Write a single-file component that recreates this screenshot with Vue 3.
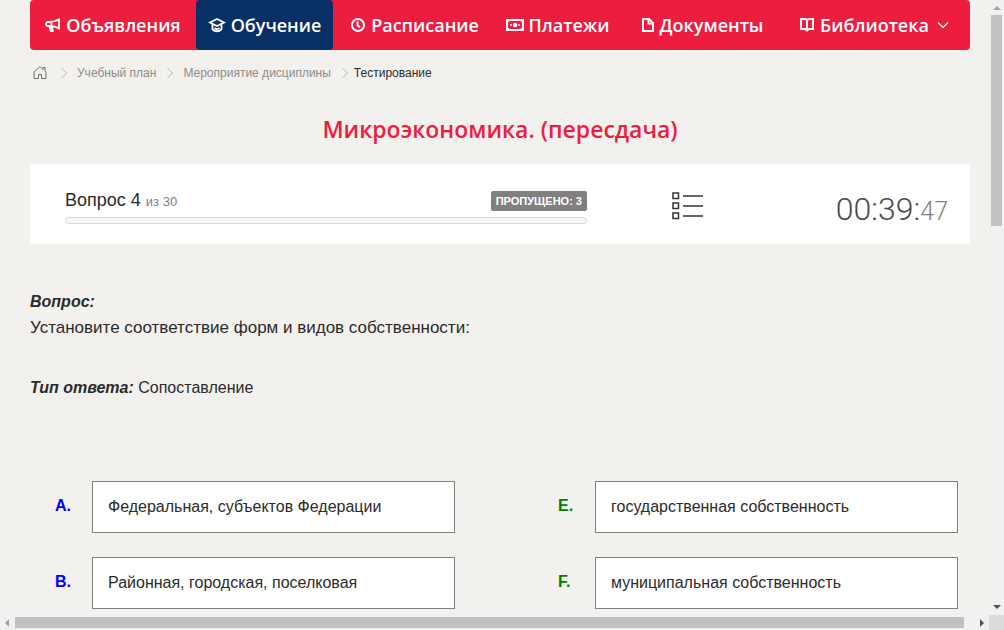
<script setup>
const left = [
  { key: 'A.', text: 'Федеральная, субъектов Федерации' },
  { key: 'B.', text: 'Районная, городская, поселковая' },
]
const right = [
  { key: 'E.', text: 'государственная собственность' },
  { key: 'F.', text: 'муниципальная собственность' },
]
const crumbs = ['Учебный план', 'Мероприятие дисциплины']
</script>

<template>
  <div class="window">
    <div class="view">
      <div class="page">
        <nav class="nav" aria-label="Главное меню">
          <a href="#" class="item">
            <svg width="16" height="16" viewBox="0 0 16 16" fill="none" stroke="currentColor" stroke-width="1.800">
              <path d="M14 1.500v11M13.500 2.500C11 4.300 8 5 4.500 5H3a2 2 0 0 0 0 4h1.500c3.500 0 6.500.7 9 2.200M6.500 5v4M4.500 9.500l1.200 4.600h2L6.800 9.500" />
            </svg>
            <span>Объявления</span>
          </a>
          <a href="#" class="item active">
            <svg width="18" height="16" viewBox="0 0 18 16" fill="none" stroke="currentColor" stroke-width="1.800">
              <path d="M2 5.500l7-3.500 7 3.500L9 9zM4.500 7.500v4.800c2.400 2.600 6.600 2.600 9 0V7.500M6.500 11c1.500 1.500 3.500 1.500 5 0" />
            </svg>
            <span>Обучение</span>
          </a>
          <a href="#" class="item">
            <svg width="16" height="16" viewBox="0 0 16 16" fill="none" stroke="currentColor" stroke-width="2">
              <circle cx="8" cy="8" r="6" />
              <path d="M7.500 4.500v3.800l2.500 2" />
            </svg>
            <span>Расписание</span>
          </a>
          <a href="#" class="item">
            <svg width="18" height="16" viewBox="0 0 18 16">
              <path fill="none" stroke="currentColor" stroke-width="2" d="M1 3h16v10H1z" />
              <path fill="currentColor" d="M1 3h4L1 6zM17 3h-4l4 3zM1 13h4l-4-3zM17 13h-4l4-3z" />
              <circle cx="9" cy="8" r="2.200" fill="currentColor" />
              <circle cx="5" cy="8" r="1" fill="currentColor" />
              <circle cx="13" cy="8" r="1" fill="currentColor" />
            </svg>
            <span>Платежи</span>
          </a>
          <a href="#" class="item">
            <svg width="14" height="16" viewBox="0 0 14 16" fill="none" stroke="currentColor" stroke-width="2">
              <path d="M2 2h6l4 4v8H2zM7.500 2v4.500H12" />
            </svg>
            <span>Документы</span>
          </a>
          <a href="#" class="item last">
            <svg width="16" height="16" viewBox="0 0 16 16" fill="none" stroke="currentColor" stroke-width="2">
              <path d="M8 3v11M2 2h4l2 1 2-1h4v10h-4l-2 1.500L6 12H2z" />
            </svg>
            <span>Библиотека</span>
            <svg class="caret" width="12" height="8" viewBox="0 0 12 8" fill="none" stroke="currentColor" stroke-width="1.300">
              <path d="M1 1.500l5 5 5-5" />
            </svg>
          </a>
        </nav>

        <nav class="crumbs" aria-label="Навигация">
          <a href="#" class="home" aria-label="Главная">
            <svg width="14" height="14" viewBox="0 0 14 14" fill="none" stroke="currentColor">
              <path d="M1.500 12.500H1V6l5.500-5h1L10 3.500V1.500h2V5l1 1.500v6H8.500v-4h-3v4z" />
            </svg>
          </a>
          <template v-for="c in crumbs" :key="c">
            <svg class="sep" width="8" height="12" viewBox="0 0 8 12" fill="none" stroke="currentColor"><path d="M1.500 1l5 5-5 5" /></svg>
            <a href="#">{{ c }}</a>
          </template>
          <svg class="sep end" width="8" height="12" viewBox="0 0 8 12" fill="none" stroke="currentColor"><path d="M1.500 1l5 5-5 5" /></svg>
          <span class="current">Тестирование</span>
        </nav>

        <h1>Микроэкономика. (пересдача)</h1>

        <section class="card">
          <div class="status">
            <div class="row">
              <div class="count">Вопрос 4 <small>из 30</small></div>
              <span class="badge">ПРОПУЩЕНО: 3</span>
            </div>
            <div class="bar" role="progressbar" aria-label="Ход теста" aria-valuenow="0" aria-valuemin="0" aria-valuemax="30"></div>
          </div>
          <button class="list" type="button" aria-label="Список вопросов">
            <svg width="32" height="28" viewBox="0 0 32 28" fill="none" stroke="currentColor">
              <path d="M1 1h5.500v5.500H1zM1 11h5.500v5.500H1zM1 21h5.500v5.500H1z" stroke-width="1.500" />
              <path d="M11 4h20M11 14h20M11 24h20" stroke-width="1.300" />
            </svg>
          </button>
          <div class="timer">00:39:<span>47</span></div>
        </section>

        <section class="question">
          <p class="lead"><b>Вопрос:</b></p>
          <p class="text">Установите соответствие форм и видов собственности:</p>
          <p class="kind"><b>Тип ответа:</b> Сопоставление</p>
        </section>

        <section class="match">
          <div class="side blue">
            <div v-for="o in left" :key="o.key" class="option">
              <b>{{ o.key }}</b>
              <div class="box">{{ o.text }}</div>
            </div>
          </div>
          <div class="side green">
            <div v-for="o in right" :key="o.key" class="option">
              <b>{{ o.key }}</b>
              <div class="box">{{ o.text }}</div>
            </div>
          </div>
        </section>
      </div>
    </div>

    <div class="track vertical" aria-hidden="true">
      <svg width="15" height="15" viewBox="0 0 15 15" fill="#a3a3a3"><path d="M4 10l4-4 4 4z" /></svg>
      <div class="rail"><div class="thumb"></div></div>
      <svg width="15" height="15" viewBox="0 0 15 15" fill="#505050"><path d="M4 5h8l-4 4z" /></svg>
    </div>
    <div class="track horizontal" aria-hidden="true">
      <svg width="15" height="15" viewBox="0 0 15 15" fill="#a3a3a3"><path d="M9 4v8L5 8z" /></svg>
      <div class="rail"><div class="thumb"></div></div>
      <svg width="15" height="15" viewBox="0 0 15 15" fill="#505050"><path d="M6 4v8l4-4z" /></svg>
    </div>
    <div class="corner"></div>
  </div>
</template>

<style>
body {
  background: #f3f1ee;
}
</style>

<style scoped>
.window {
  display: grid;
  grid-template: minmax(0, 1fr) 15px / minmax(0, 1fr) 15px;
  height: 100vh;
  background: #f3f1ee;
  color: #2b2b2b;
  font: 16px/26px "Liberation Sans", Arial, sans-serif;
}
.window *,
.window {
  box-sizing: border-box;
}
.view {
  overflow: hidden;
}
.page {
  padding: 0 19px 24px 30px;
}
.nav {
  display: grid;
  grid-template-columns: 166fr 137fr 163fr 123fr 166fr 185fr;
  height: 50px;
  border-radius: 4px;
  background: #ee1c3f;
}
.item {
  display: flex;
  align-items: center;
  justify-content: center;
  gap: 5px;
  color: #fff;
  font: 600 18px/50px "Open Sans", "Noto Sans", sans-serif;
  text-decoration: none;
  white-space: nowrap;
  border-radius: 4px;
}
.item svg {
  flex: none;
}
.item.active {
  background: #083066;
}
.item.last {
  padding-right: 7px;
}
.caret {
  margin-left: 3px;
}
.crumbs {
  display: flex;
  align-items: center;
  height: 46px;
  padding-left: 3px;
  font-size: 12px;
  line-height: 46px;
}
.crumbs a {
  color: #8d8c8a;
  text-decoration: none;
}
.crumbs .home {
  display: flex;
  color: #707070;
  margin-right: 3px;
}
.sep {
  margin: 0 9px 0 10px;
  color: #b5b4b2;
}
.sep.end {
  margin-right: 5px;
}
.current {
  color: #2b2b2b;
}
h1 {
  margin: 16px 0 18px;
  color: #ee1c3f;
  font: 600 23px/34px "Open Sans", "Noto Sans", sans-serif;
  text-align: center;
}
.card {
  display: grid;
  grid-template-columns: 592fr 132fr 216fr;
  align-items: center;
  min-height: 80px;
  padding-top: 4px;
  background: #fff;
}
.status {
  padding: 0 35px;
}
.row {
  display: flex;
  align-items: center;
  justify-content: space-between;
  height: 24px;
}
.count {
  font-size: 18px;
}
.count small {
  color: #808080;
  font-size: 13px;
}
.badge {
  padding: 0 5px;
  border-radius: 2px;
  background: #808080;
  color: #fff;
  font: bold 11px/20px "Liberation Sans", Arial, sans-serif;
}
.bar {
  height: 7px;
  margin-top: 4px;
  border: 1px solid #d8d8d8;
  border-radius: 4px;
  background: #f7f7f7;
}
.list {
  display: flex;
  justify-self: center;
  padding: 0;
  border: 0;
  background: none;
  color: #333;
}
.timer {
  padding: 8px 22px 0 0;
  color: #4a4a4a;
  font: 300 32px/40px Roboto, sans-serif;
  text-align: right;
}
.timer span {
  color: #808080;
  font-size: 25px;
}
.question {
  margin-top: 45px;
}
p {
  margin: 0;
}
.question b {
  font-style: italic;
}
.text {
  font-size: 17px;
}
.kind {
  margin-top: 34px;
}
.match {
  display: grid;
  grid-template-columns: 1fr 1fr;
  column-gap: 103px;
  margin-top: 80px;
  padding: 0 12px 0 25px;
}
.side {
  display: grid;
  gap: 24px;
}
.option {
  display: grid;
  grid-template-columns: 37px 1fr;
  line-height: 50px;
}
.blue b {
  color: #00f;
}
.green b {
  color: #008000;
}
.box {
  padding: 0 15px;
  border: 1px solid #808080;
  background: #fff;
}
.track {
  display: flex;
  background: #f1f1f1;
}
.track svg {
  flex: none;
}
.vertical {
  flex-direction: column;
}
.rail {
  flex: 1;
}
.thumb {
  background: #c1c1c1;
}
.vertical .rail {
  padding: 0 2px;
}
.vertical .thumb {
  height: 36%;
}
.horizontal .rail {
  padding: 2px 0;
}
.horizontal .thumb {
  width: 99%;
  height: 11px;
}
.corner {
  background: #dcdcdc;
}
</style>
